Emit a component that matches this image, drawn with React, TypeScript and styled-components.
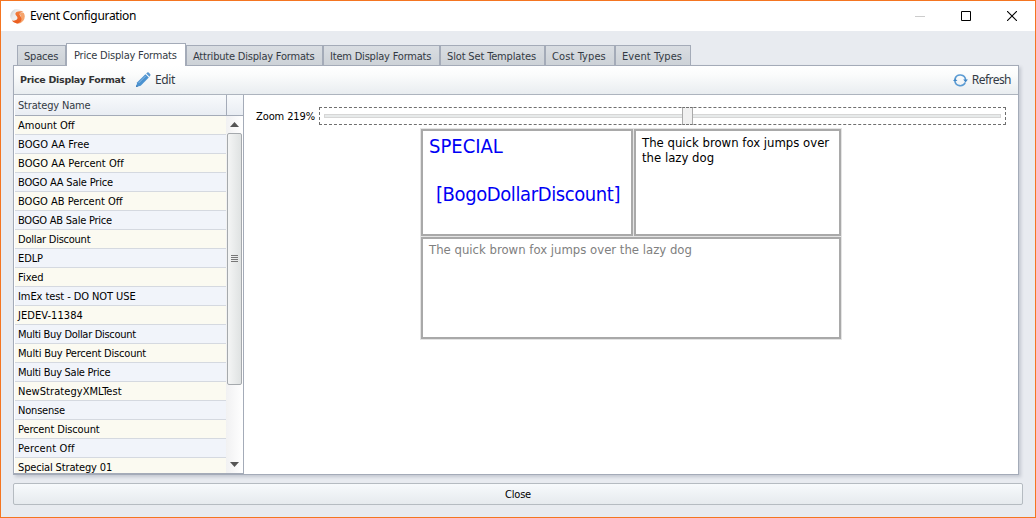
import React from "react";
import styled, { createGlobalStyle } from "styled-components";

const Global = createGlobalStyle`
  * { box-sizing: border-box; }
  body { margin: 0; overflow: hidden; }
`;

const ui = `"DejaVu Sans Condensed", "DejaVu Sans", sans-serif`;
const segoe = `"Noto Sans", "Open Sans", sans-serif`;

const Window = styled.div`
  width: 1036px;
  height: 518px;
  border: 1px solid #f47521;
  background: #e8ebf0;
  display: flex;
  flex-direction: column;
  font: 11px/14px ${ui};
  color: #000;
  white-space: nowrap;
`;
const TitleBar = styled.header`
  height: 30px;
  flex: none;
  background: #fff;
  display: flex;
  align-items: center;
  padding-left: 9px;
`;
const Title = styled.h1`
  margin: 0 0 0 5px;
  flex: 1;
  font: 400 12px/16px ${segoe};
  letter-spacing: -0.32px;
`;
const WindowButtons = styled.div`
  display: flex;
  width: 138px;
`;
const WindowButton = styled.button`
  width: 46px;
  height: 30px;
  padding: 0;
  border: 0;
  background: none;
  display: flex;
  align-items: center;
  justify-content: center;
`;
const Body = styled.main`
  display: flex;
  flex-direction: column;
  padding: 12px 12px 0;
`;
const Tabs = styled.nav`
  display: flex;
  align-items: flex-end;
  height: 22px;
  padding-left: 4px;
`;
const Tab = styled.button<{ $w: number; $active?: boolean; $ls?: number }>`
  width: ${(p) => p.$w}px;
  height: ${(p) => (p.$active ? 23 : 20)}px;
  margin-bottom: ${(p) => (p.$active ? -1 : 0)}px;
  padding: ${(p) => (p.$active ? "1px 0 0 7px" : "2px 0 0 6px")};
  border: 1px solid #a4abb8;
  border-bottom: 0;
  background: ${(p) => (p.$active ? "#fff" : "linear-gradient(#d9dde2, #cdd2d7)")};
  color: #333a44;
  font: 11px/14px ${ui};
  letter-spacing: ${(p) => p.$ls ?? -0.2}px;
  text-align: left;
  position: relative;
`;
const Panel = styled.section`
  width: 1006px;
  height: 410px;
  border: 1px solid #a4abb8;
  background: #fff;
  box-shadow: 2px 2px 3px rgba(90, 100, 120, 0.25);
  display: flex;
  flex-direction: column;
`;
const Toolbar = styled.div`
  height: 29px;
  flex: none;
  padding: 0 7px 0 6px;
  border-bottom: 1px solid #adb4be;
  background: linear-gradient(#fff, #fbfcfc 30%, #e9edf0);
  display: flex;
  align-items: center;
`;
const ToolbarTitle = styled.span`
  width: 115px;
  font: 700 9.5px/14px "DejaVu Sans", sans-serif;
  letter-spacing: -0.3px;
  color: #333;
`;
const ToolButton = styled.button<{ $right?: boolean }>`
  margin-left: ${(p) => (p.$right ? "auto" : "0")};
  padding: 0;
  border: 0;
  background: none;
  display: flex;
  align-items: center;
  gap: 4px;
  color: #333a44;
  font: 12px/16px ${segoe};
  letter-spacing: ${(p) => (p.$right ? -0.55 : -0.35)}px;
`;
const Content = styled.div`
  display: flex;
  flex: 1;
  min-height: 0;
`;
const Grid = styled.div`
  width: 231px;
  margin-left: -1px;
  padding-left: 1px;
  border: 1px solid #a4abb8;
  border-top: 0;
  display: flex;
  flex-direction: column;
`;
const GridHeader = styled.div`
  height: 21px;
  flex: none;
  display: flex;
  border-bottom: 1px solid #a4abb8;
  background: linear-gradient(#f8fafc, #e9edf3);
  color: #333a44;
`;
const HeaderCell = styled.div`
  width: 212px;
  padding: 4px 0 0 3px;
  border-right: 1px solid #a4abb8;
  letter-spacing: -0.18px;
`;
const GridBody = styled.div`
  display: flex;
  flex: 1;
  min-height: 0;
`;
const Rows = styled.div`
  width: 212px;
  overflow: hidden;
`;
const Row = styled.div<{ $ls?: number }>`
  height: 19px;
  padding: 3px 0 0 3px;
  border-bottom: 1px solid #d5d9e0;
  background: #fbfaf1;
  letter-spacing: ${(p) => p.$ls ?? -0.2}px;
  &:nth-child(even) { background: #f1f4fa; }
`;
const ScrollBar = styled.div`
  width: 17px;
  display: flex;
  flex-direction: column;
  align-items: center;
  background: linear-gradient(90deg, #f1f1f2, #fff);
`;
const Arrow = styled.div`
  height: 17px;
  display: flex;
  align-items: center;
`;
const ScrollThumb = styled.div`
  width: 15px;
  height: 252px;
  border: 1px solid #a5a9ad;
  border-radius: 2px;
  background: linear-gradient(90deg, #f4f5f5, #dfe2e2);
  display: flex;
  align-items: center;
  justify-content: center;
`;
const ScrollSpace = styled.div`
  flex: 1;
`;
const Preview = styled.div`
  flex: 1;
  padding: 12px 12px 0;
`;
const ZoomRow = styled.div`
  display: flex;
  height: 18px;
`;
const ZoomLabel = styled.label`
  width: 63px;
  padding-top: 3px;
  letter-spacing: -0.1px;
`;
const Slider = styled.div`
  width: 687px;
  height: 18px;
  border: 1px dashed #6f6f6f;
  display: grid;
  align-items: center;
  padding: 0 4px;
`;
const Track = styled.div`
  grid-area: 1 / 1;
  height: 4px;
  border: 1px solid #d6d6d6;
  background: #e7eaea;
`;
const Thumb = styled.div`
  grid-area: 1 / 1;
  width: 11px;
  height: 18px;
  margin: -1px 0 -1px 358px;
  border: 1px solid #aaa;
  border-block: 1px dashed #707070;
  background: #f0f0f0;
`;
const Template = styled.div`
  width: 420px;
  margin: 4px 0 0 165px;
  display: grid;
  grid-template-columns: 212px 207px;
  grid-template-rows: 107px 102px;
  gap: 1px;
`;
const Slot = styled.div<{ $tone?: string; $wide?: boolean }>`
  grid-column: ${(p) => (p.$wide ? "1 / 3" : "auto")};
  border: 2px solid #a9a9a9;
  box-shadow: 0 0 0 1px #e4e4e4;
  padding: ${(p) => (p.$wide ? 3 : 4)}px 0 0 6px;
  color: ${(p) => p.$tone ?? "#000"};
  font: 13px/15px ${ui};
`;
const BigLine = styled.div<{ $indent?: boolean }>`
  font: 20px/24px ${ui};
  letter-spacing: ${(p) => (p.$indent ? -0.4 : 0)}px;
  padding-left: ${(p) => (p.$indent ? 7 : 0)}px;
  margin-top: ${(p) => (p.$indent ? 24 : -1)}px;
`;
const CloseButton = styled.button`
  width: 1010px;
  height: 22px;
  margin-top: 8px;
  padding: 1px 0 0;
  border: 1px solid #b5bbc1;
  border-radius: 2px;
  background: linear-gradient(#f7fafc, #e6eaee);
  font: 11px/14px ${ui};
  letter-spacing: -0.2px;
`;

const AppLogo = () => (
  <svg width="15" height="17" viewBox="0 0 15 17">
    <defs>
      <linearGradient id="orb" x1="0" y1="0" x2="1" y2="0.6">
        <stop offset="0" stopColor="#c4c6c8" />
        <stop offset="0.4" stopColor="#ececed" />
        <stop offset="1" stopColor="#f3f3f3" />
      </linearGradient>
      <linearGradient id="flame" x1="0" y1="0" x2="0" y2="1">
        <stop offset="0" stopColor="#f2803f" />
        <stop offset="1" stopColor="#ea5a1c" />
      </linearGradient>
    </defs>
    <circle cx="7" cy="7.800" r="6.800" fill="url(#orb)" />
    <path d="M13.800 5A7.200 7.200 0 0 1 6 15.500C11 13 12.500 9 9.800 6.500C10 4.500 12 4 13.800 5Z" fill="#f6a46c" />
    <path d="M13.500 3.600C8.500 2.400 5 3.800 5.400 6C5.800 8 8 8.600 7.400 10.600C6.800 12.300 4.500 13 2 12.600C4 15.600 8.500 16.300 10.700 13.500C12.700 10.800 10.600 8.300 9.800 6.900C9 5.300 11 4.300 13.500 3.600Z" fill="url(#flame)" />
  </svg>
);
const Pencil = () => (
  <svg width="16" height="16" viewBox="0 0 16 16">
    <path d="M1 15L2.300 10.300L10.400 2.200L13.800 5.600L5.700 13.700Z" fill="#4b92d0" />
    <path d="M3.600 11L10.600 4" stroke="#8dbce6" strokeWidth="1" />
    <path d="M11.200 1.500L12.300 .5Q13 0 13.700 .6L15.300 2.200Q15.900 2.900 15.300 3.600L14.500 4.700Z" fill="#5b98d0" />
    <path d="M1.500 13L3 14.400L1 15Z" fill="#2f6fae" />
  </svg>
);
const RefreshIcon = () => (
  <svg width="15" height="16" viewBox="0 0 15 16" fill="none" stroke="#5b9bd3" strokeWidth="1.700">
    <path d="M2 7A5.400 5.400 0 0 1 12.600 8" />
    <path d="M12.200 10.500A5.400 5.400 0 0 1 1.900 9" />
    <path d="M10.200 7.600H14.900L12.600 10.400Z M.1 9L2 6.200L4.400 9Z" fill="#3f86c6" stroke="none" />
  </svg>
);

const tabs: { label: string; w: number; active?: boolean; ls?: number }[] = [
  { label: "Spaces", w: 49 },
  { label: "Price Display Formats", w: 120, active: true },
  { label: "Attribute Display Formats", w: 137 },
  { label: "Item Display Formats", w: 117 },
  { label: "Slot Set Templates", w: 105, ls: -0.15 },
  { label: "Cost Types", w: 70, ls: 0.1 },
  { label: "Event Types", w: 76, ls: 0.08 },
];
const strategies: { name: string; ls?: number }[] = [
  { name: "Amount Off", ls: 0 },
  { name: "BOGO AA Free", ls: 0.05 },
  { name: "BOGO AA Percent Off", ls: 0.04 },
  { name: "BOGO AA Sale Price" },
  { name: "BOGO AB Percent Off", ls: 0 },
  { name: "BOGO AB Sale Price", ls: -0.24 },
  { name: "Dollar Discount", ls: -0.24 },
  { name: "EDLP", ls: -0.1 },
  { name: "Fixed", ls: 0 },
  { name: "ImEx test - DO NOT USE", ls: -0.08 },
  { name: "JEDEV-11384", ls: 0.06 },
  { name: "Multi Buy Dollar Discount", ls: -0.3 },
  { name: "Multi Buy Percent Discount" },
  { name: "Multi Buy Sale Price", ls: -0.28 },
  { name: "NewStrategyXMLTest", ls: 0.06 },
  { name: "Nonsense" },
  { name: "Percent Discount", ls: -0.14 },
  { name: "Percent Off", ls: 0.15 },
  { name: "Special Strategy 01", ls: -0.15 },
];

export default function App() {
  return (
    <Window>
      <Global />
      <TitleBar>
        <AppLogo />
        <Title>Event Configuration</Title>
        <WindowButtons>
          <WindowButton aria-label="Minimize">
            <svg width="10" height="10"><path d="M0 5.500H10" stroke="#ccc" /></svg>
          </WindowButton>
          <WindowButton aria-label="Maximize">
            <svg width="10" height="10"><path d="M.5 .5H9.500V9.500H.5Z" fill="none" stroke="#000" /></svg>
          </WindowButton>
          <WindowButton aria-label="Close window">
            <svg width="10" height="10"><path d="M0 0L10 10M10 0L0 10" stroke="#000" strokeWidth="1.100" /></svg>
          </WindowButton>
        </WindowButtons>
      </TitleBar>
      <Body>
        <Tabs>
          {tabs.map((t) => (
            <Tab key={t.label} $w={t.w} $active={t.active} $ls={t.ls}>{t.label}</Tab>
          ))}
        </Tabs>
        <Panel>
          <Toolbar>
            <ToolbarTitle>Price Display Format</ToolbarTitle>
            <ToolButton><Pencil />Edit</ToolButton>
            <ToolButton $right><RefreshIcon />Refresh</ToolButton>
          </Toolbar>
          <Content>
            <Grid>
              <GridHeader><HeaderCell>Strategy Name</HeaderCell></GridHeader>
              <GridBody>
                <Rows>{strategies.map((s) => <Row key={s.name} $ls={s.ls}>{s.name}</Row>)}</Rows>
                <ScrollBar>
                  <Arrow><svg width="9" height="5"><path d="M0 5L4.500 0L9 5Z" fill="#555" /></svg></Arrow>
                  <ScrollThumb>
                    <svg width="7" height="8"><path d="M0 .5H7M0 2.500H7M0 4.500H7M0 6.500H7" stroke="#777" /></svg>
                  </ScrollThumb>
                  <ScrollSpace />
                  <Arrow><svg width="9" height="5"><path d="M0 0L4.500 5L9 0Z" fill="#555" /></svg></Arrow>
                </ScrollBar>
              </GridBody>
            </Grid>
            <Preview>
              <ZoomRow>
                <ZoomLabel>Zoom 219%</ZoomLabel>
                <Slider><Track /><Thumb /></Slider>
              </ZoomRow>
              <Template>
                <Slot $tone="#0000f5">
                  <BigLine>SPECIAL</BigLine>
                  <BigLine $indent>[BogoDollarDiscount]</BigLine>
                </Slot>
                <Slot>The quick brown fox jumps over<br />the lazy dog</Slot>
                <Slot $tone="#808080" $wide>The quick brown fox jumps over the lazy dog</Slot>
              </Template>
            </Preview>
          </Content>
        </Panel>
        <CloseButton>Close</CloseButton>
      </Body>
    </Window>
  );
}
